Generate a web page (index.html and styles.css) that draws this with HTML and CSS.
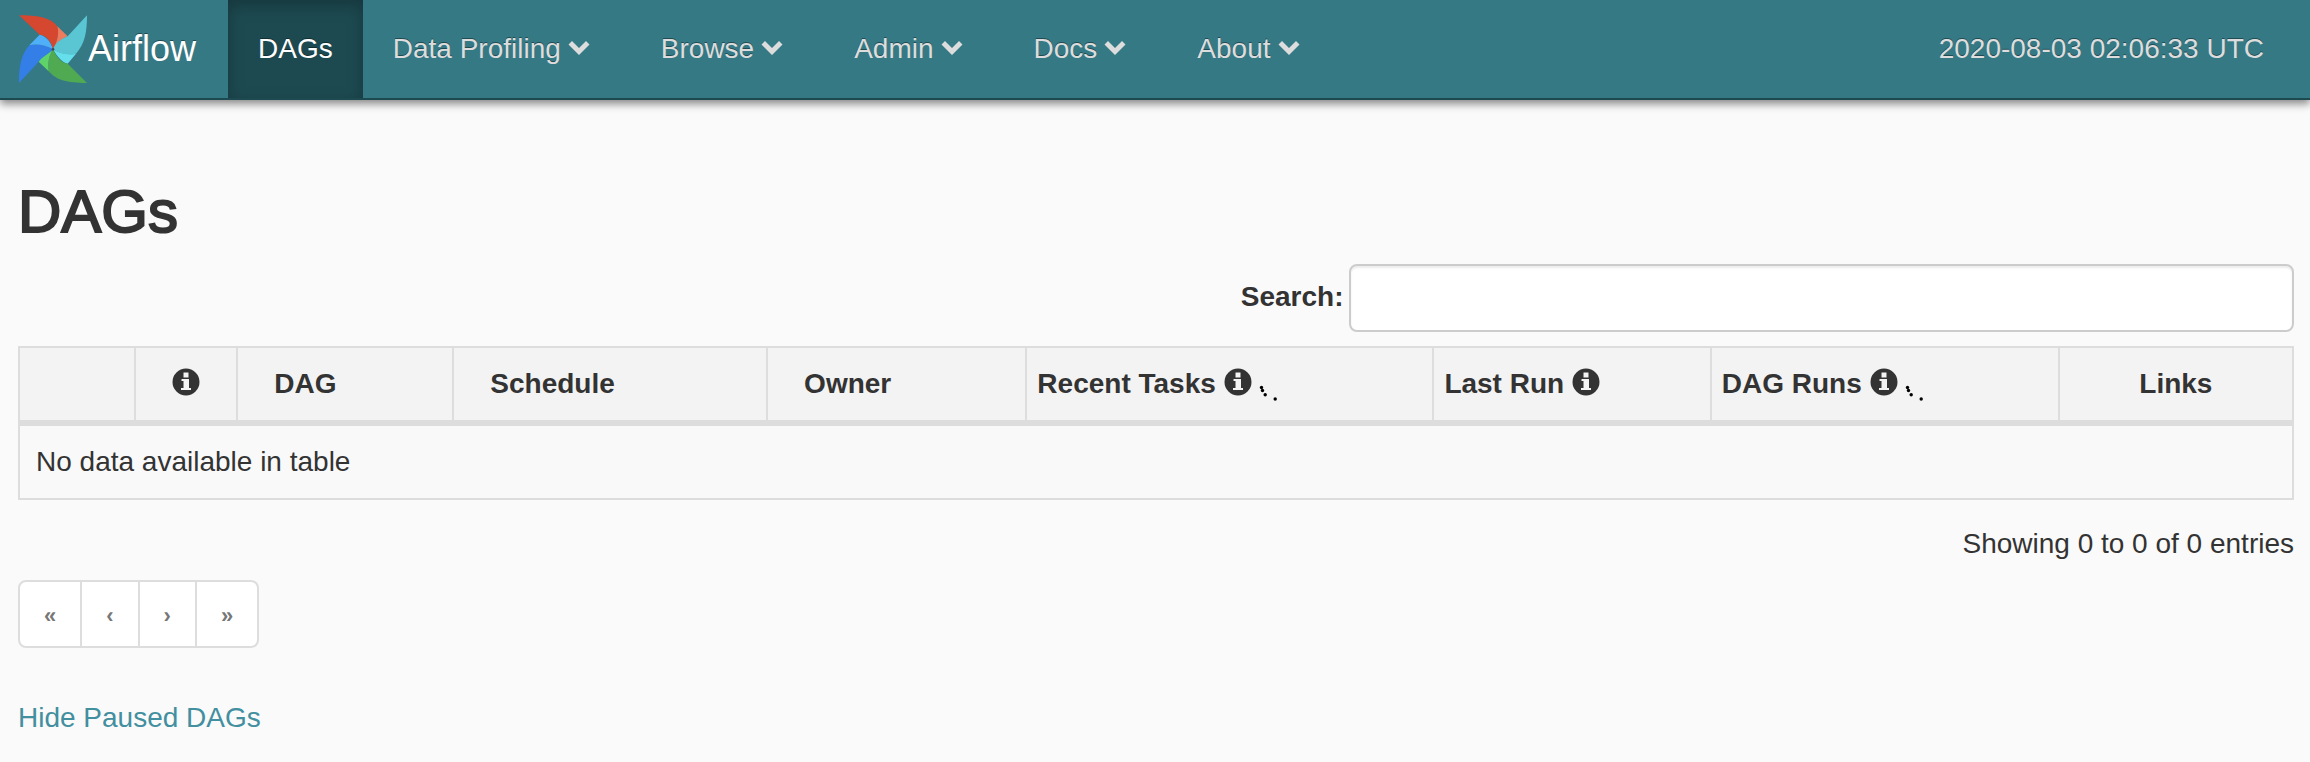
FILE: index.html
```html
<!DOCTYPE html>
<html lang="en">
<head>
<meta charset="utf-8">
<title>Airflow - DAGs</title>
<link rel="stylesheet" href="styles.css">
</head>
<body>
<svg class="defs" width="0" height="0" aria-hidden="true">
  <symbol id="chevron" viewBox="0 0 28 28"><path d="M3.500 9.500 7 6 14 13 21 6 24.500 9.500 14 20z"/></symbol>
  <symbol id="info" viewBox="0 0 28 28"><path fill-rule="evenodd" d="M14 0.500a13.500 13.500 0 1 0 0 27a13.500 13.500 0 1 0 0-27zM11.500 4.500h5v5h-5zM9.500 11h7.500v9h2v2h-10v-2h2.500v-7h-2z"/></symbol>
  <symbol id="dots" viewBox="0 0 20 20"><circle cx="2.500" cy="4.500" r="1.700"/><circle cx="3.500" cy="7.500" r="1.700"/><circle cx="6.200" cy="11.800" r="1.700"/><circle cx="16.200" cy="16" r="1.700"/></symbol>
</svg>
<header class="navbar">
  <a class="brand" href="#">
    <svg class="logo" viewBox="57 44 204 204" aria-hidden="true">
      <path fill="#d5472f" d="M57 45C110 45 150 50 172 78C178 100 172 125 159 147C155 125 140 105 119 103Z"/>
      <path fill="#ec7c5d" d="M172 78L203 108C180 118 168 130 159 147C172 125 178 100 172 78Z"/>
      <path fill="#5ac5d3" d="M261 45C261 95 255 130 228 160C200 165 180 160 159 147C165 130 180 117 203 108Z"/>
      <path fill="#66dfed" d="M228 160L203 190C188 188 172 170 159 147C180 160 205 165 228 160Z"/>
      <path fill="#4faa51" d="M261 248C200 248 170 240 146 213C142 190 147 165 159 147C170 170 182 188 203 190Z"/>
      <path fill="#60d26a" d="M146 213L116 184C122 170 145 160 159 147C147 165 142 190 146 213Z"/>
      <path fill="#347ee8" d="M57 248C57 200 62 165 88 135C110 129 138 135 159 147C150 160 125 170 116 184Z"/>
      <path fill="#4fb0f9" d="M88 135L119 103C140 108 152 125 159 147C138 135 110 129 88 135Z"/>
      <circle cx="159" cy="147" r="4" fill="#3b4a4c"/>
    </svg>
    <span>Airflow</span>
  </a>
  <nav class="menu">
    <a class="menu-item active" href="#">DAGs</a>
    <a class="menu-item dropdown" href="#">Data Profiling <svg class="icon"><use href="#chevron"/></svg></a>
    <a class="menu-item dropdown" href="#">Browse <svg class="icon"><use href="#chevron"/></svg></a>
    <a class="menu-item dropdown" href="#">Admin <svg class="icon"><use href="#chevron"/></svg></a>
    <a class="menu-item dropdown" href="#">Docs <svg class="icon"><use href="#chevron"/></svg></a>
    <a class="menu-item dropdown" href="#">About <svg class="icon"><use href="#chevron"/></svg></a>
  </nav>
  <a class="menu-item clock" href="#">2020-08-03 02:06:33 UTC</a>
</header>
<main class="page">
  <h1 class="title">DAGs</h1>
  <form class="search">
    <label class="search-label" for="search">Search:</label>
    <input class="search-input" id="search" type="search">
  </form>
  <table class="dags">
    <colgroup>
      <col class="col-toggle"><col class="col-info"><col class="col-dag"><col class="col-schedule"><col class="col-owner"><col class="col-tasks"><col class="col-last"><col class="col-runs"><col class="col-links">
    </colgroup>
    <thead>
      <tr>
        <th></th>
        <th class="center"><svg class="icon"><use href="#info"/></svg></th>
        <th class="sortable">DAG</th>
        <th class="sortable">Schedule</th>
        <th class="sortable">Owner</th>
        <th>Recent Tasks <svg class="icon"><use href="#info"/></svg> <svg class="loading"><use href="#dots"/></svg></th>
        <th>Last Run <svg class="icon"><use href="#info"/></svg></th>
        <th>DAG Runs <svg class="icon"><use href="#info"/></svg> <svg class="loading"><use href="#dots"/></svg></th>
        <th class="center">Links</th>
      </tr>
    </thead>
    <tbody>
      <tr><td colspan="9">No data available in table</td></tr>
    </tbody>
  </table>
  <p class="summary">Showing 0 to 0 of 0 entries</p>
  <div class="pagination">
    <button class="page-button" type="button" disabled>«</button>
    <button class="page-button" type="button" disabled>‹</button>
    <button class="page-button" type="button" disabled>›</button>
    <button class="page-button" type="button" disabled>»</button>
  </div>
  <a class="toggle-paused" href="#">Hide Paused DAGs</a>
</main>
</body>
</html>
```
FILE: styles.css
```css
* { box-sizing: border-box; }
body {
  margin: 0;
  background: #fafafa;
  color: #333;
  font-family: "Liberation Sans", Arial, sans-serif;
  font-size: 28px;
  line-height: 40px;
}
.defs { position: absolute; }
.icon {
  width: 28px;
  height: 28px;
  fill: currentColor;
}
.navbar {
  display: flex;
  align-items: stretch;
  min-height: 100px;
  padding: 0 16px 0 18px;
  background: #357985;
  border-bottom: 2px solid #1d4a51;
  box-shadow: 0 4px 8px rgba(0, 0, 0, 0.45);
  text-shadow: 0 -1px 0 rgba(0, 0, 0, 0.4);
}
.brand {
  display: flex;
  align-items: center;
  padding-right: 32px;
  color: #fff;
  font-size: 36px;
  text-decoration: none;
}
.logo { width: 70px; height: 68px; }
.menu { display: flex; }
.menu-item {
  display: flex;
  align-items: center;
  gap: 4px;
  padding: 0 30px;
  color: #ddd;
  text-decoration: none;
  white-space: nowrap;
}
.menu-item.dropdown { padding-right: 38px; }
.menu-item.active {
  background: #1d4a51;
  color: #fff;
  box-shadow: inset 0 6px 16px rgba(0, 0, 0, 0.25);
}
.clock { margin-left: auto; }
.page { padding: 80px 16px 24px 18px; }
.title {
  margin: 0 0 20px;
  font-size: 60px;
  font-weight: normal;
  line-height: 64px;
  -webkit-text-stroke: 2px currentColor;
}
.search {
  display: flex;
  justify-content: flex-end;
  align-items: center;
  gap: 6px;
  margin-bottom: 14px;
}
.search-label { padding-bottom: 2px; font-weight: bold; }
.search-input {
  width: 41.5%;
  height: 68px;
  padding: 12px 24px;
  border: 2px solid #ccc;
  border-radius: 8px;
  background: #fff;
  box-shadow: inset 0 2px 2px rgba(0, 0, 0, 0.08);
  color: inherit;
  font: inherit;
}
.dags {
  width: 100%;
  table-layout: fixed;
  border-spacing: 0;
  border: solid #ddd;
  border-width: 2px 0 2px 2px;
}
.col-toggle { width: 5.1%; }
.col-info { width: 4.5%; }
.col-dag { width: 9.5%; }
.col-schedule { width: 13.8%; }
.col-owner { width: 11.4%; }
.col-tasks { width: 17.9%; }
.col-last { width: 12.2%; }
.col-runs { width: 15.3%; }
.col-links { width: 10.3%; }
.dags th {
  padding: 16px 10px;
  border-right: 2px solid #ddd;
  border-bottom: 6px solid #ddd;
  background: #f3f3f3;
  text-align: left;
  white-space: nowrap;
}
.dags th.sortable { padding-left: 36px; }
.dags th.center { text-align: center; }
.dags th .icon { vertical-align: -3px; }
.dags td {
  padding: 16px;
  border-right: 2px solid #ddd;
  background: #f9f9f9;
}
.loading {
  width: 20px;
  height: 20px;
  fill: #000;
  vertical-align: -10px;
}
.summary { margin: 24px 0 16px; text-align: right; }
.pagination { display: flex; margin-bottom: 50px; }
.page-button {
  padding: 14px 24px 10px;
  border: 2px solid #ddd;
  border-left-width: 0;
  background: #fff;
  color: #777;
  font: bold 22px/40px "Liberation Sans", Arial, sans-serif;
}
.page-button:first-child {
  border-left-width: 2px;
  border-radius: 8px 0 0 8px;
}
.page-button:last-child { border-radius: 0 8px 8px 0; }
.toggle-paused { color: #428f9f; text-decoration: none; }
```
